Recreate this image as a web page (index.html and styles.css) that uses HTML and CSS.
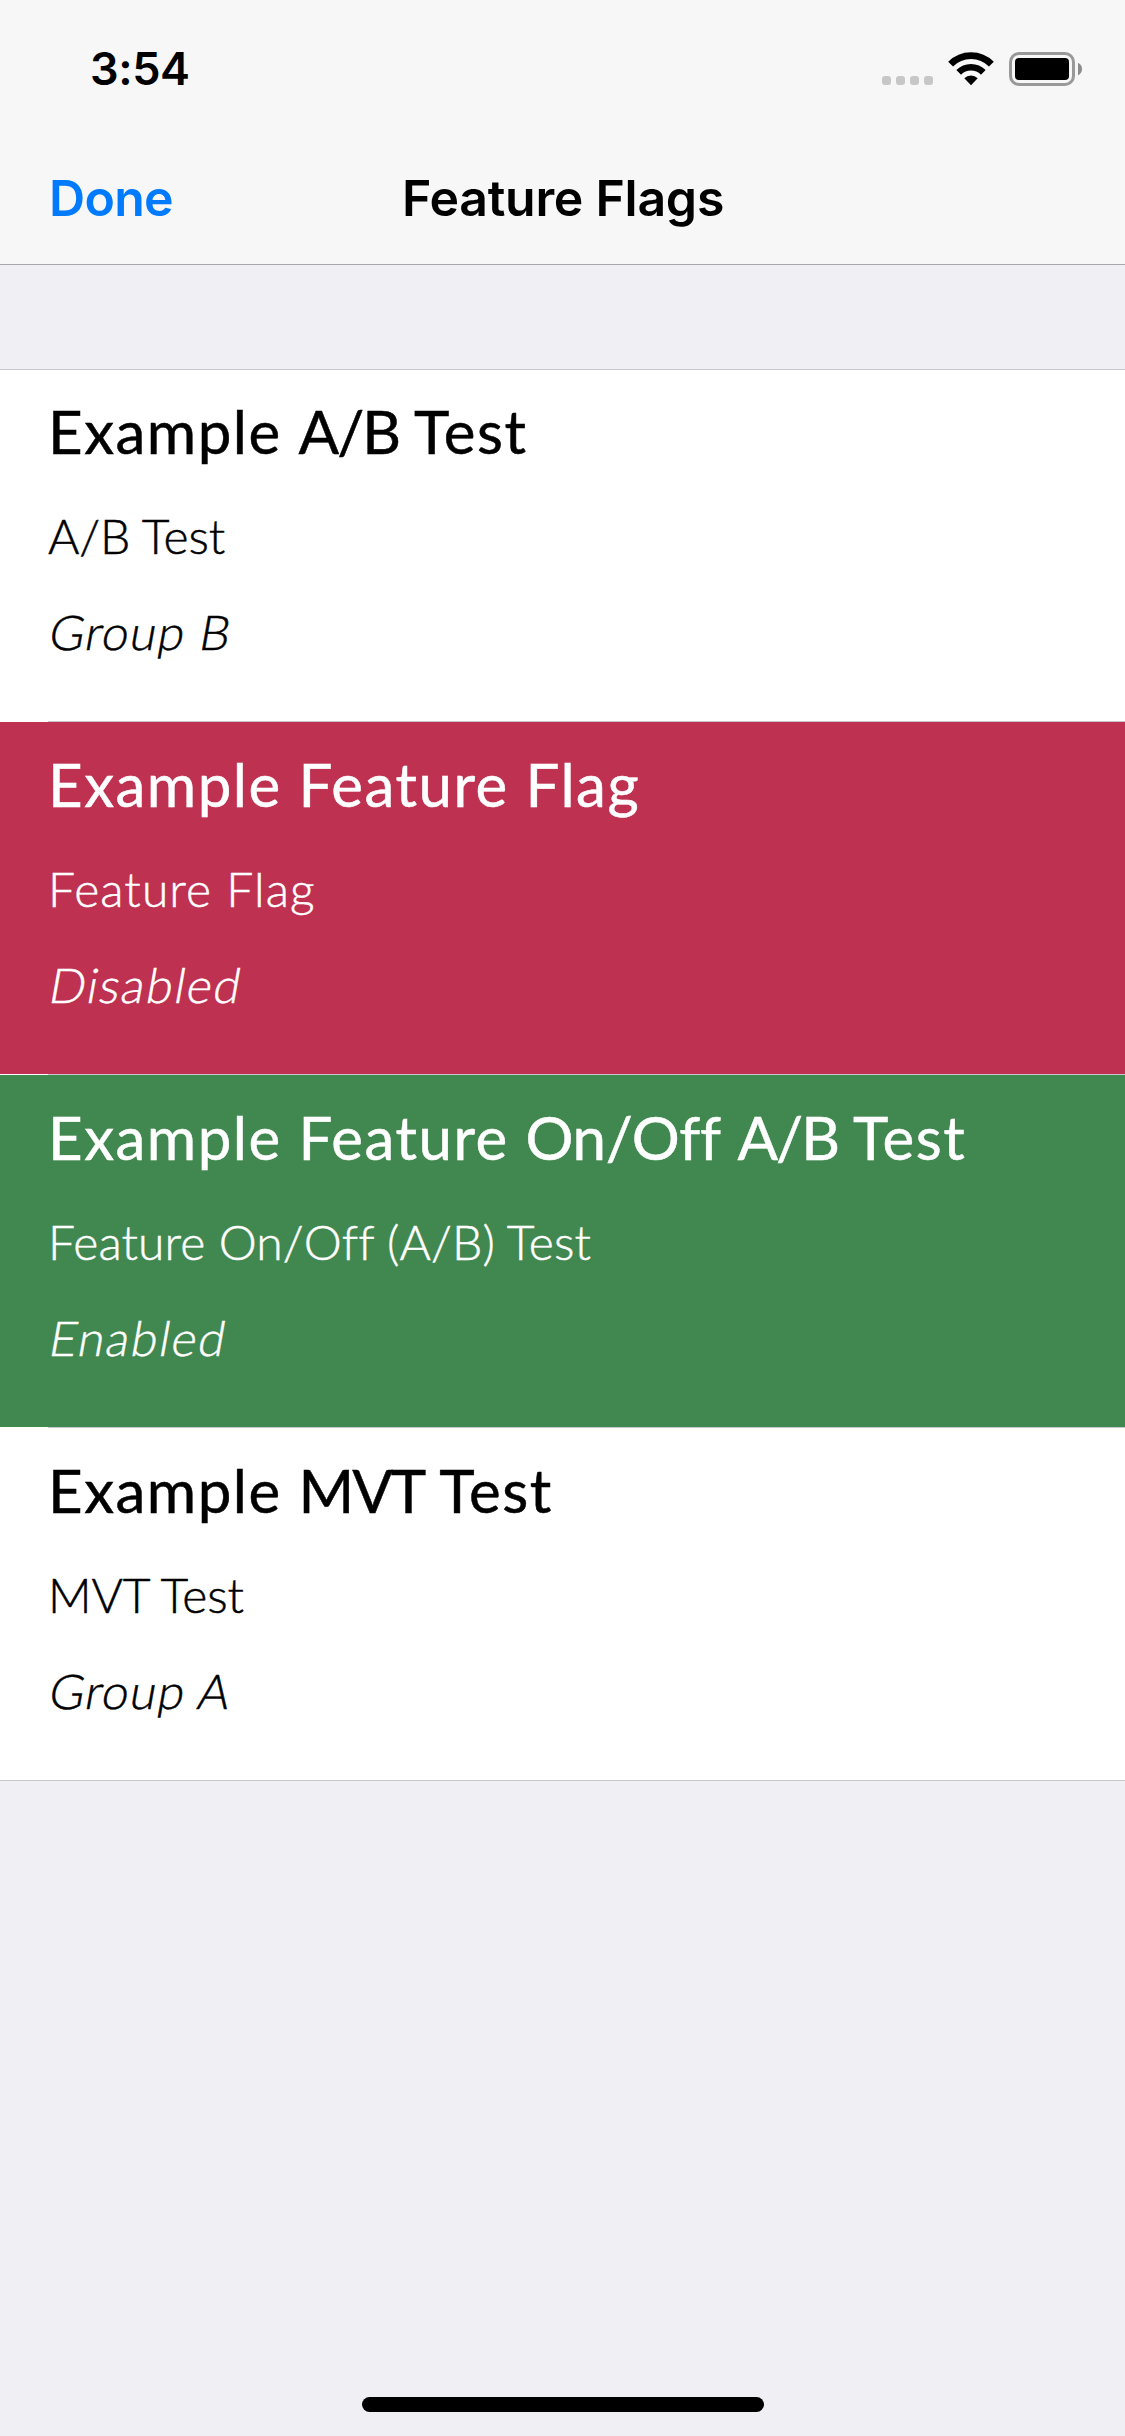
FILE: index.html
```html
<!DOCTYPE html>
<html lang="en">
<head>
<meta charset="utf-8">
<title>Feature Flags</title>
<link rel="stylesheet" href="styles.css">
</head>
<body>
<div class="screen">
  <header class="header">
    <div class="status">
      <span class="time">3:54</span>
      <div class="indicators">
        <div class="signal"><i class="dot"></i><i class="dot"></i><i class="dot"></i><i class="dot"></i></div>
        <svg class="wifi" width="46" height="34" viewBox="0 0 46 34">
          <path d="M2.6 12.1A28.6 28.6 0 0 1 43.4 12.1" fill="none" stroke="#000" stroke-width="6.8"/>
          <path d="M10.7 20.4A17.4 17.4 0 0 1 35.3 20.4" fill="none" stroke="#000" stroke-width="6.6"/>
          <path d="M16.3 26.3A9.6 9.6 0 0 1 29.7 26.3L23 33.2Z"/>
        </svg>
        <svg class="battery" width="74" height="34" viewBox="0 0 74 34">
          <rect x="1.5" y="1.5" width="63" height="31" rx="8.5" fill="none" stroke="#999" stroke-width="3"/>
          <rect x="6" y="6" width="54" height="22" rx="4"/>
          <path d="M69 10.7C71.6 12 73 14.3 73 17S71.6 22 69 23.3Z" fill="#8c8c8c"/>
        </svg>
      </div>
    </div>
    <nav class="nav">
      <a class="done">Done</a>
      <h1 class="heading">Feature Flags</h1>
    </nav>
  </header>
  <main class="list">
    <section class="row first">
      <h2 class="title">Example <span class="close">A/B</span> Test</h2>
      <p class="kind tight">A/B Test</p>
      <p class="value">Group B</p>
    </section>
    <div class="separator"></div>
    <section class="row disabled">
      <h2 class="title">Example Feature Flag</h2>
      <p class="kind wide">Feature Flag</p>
      <p class="value wide">Disabled</p>
    </section>
    <div class="separator"></div>
    <section class="row enabled">
      <h2 class="title">Example Feature <span class="snug">On/Off</span> <span class="close">A/B</span> Test</h2>
      <p class="kind">Feature On/Off (A/B) Test</p>
      <p class="value wide">Enabled</p>
    </section>
    <div class="separator"></div>
    <section class="row">
      <h2 class="title">Example <span class="close">MVT</span> Test</h2>
      <p class="kind tight">MVT Test</p>
      <p class="value">Group A</p>
    </section>
    <div class="separator full"></div>
  </main>
  <div class="home"></div>
</div>
</body>
</html>
```
FILE: styles.css
```css
* { box-sizing: border-box; margin: 0; padding: 0; }
body { background: #efeff4; color: #000; font-family: Lato, "Open Sans", sans-serif; }
.screen { width: 1125px; height: 2436px; display: flex; flex-direction: column; background: #efeff4; overflow: hidden; }

.header { height: 265px; background: #f7f7f7; border-bottom: 1px solid #a7a7aa; font-family: Inter, sans-serif; font-weight: 600; }
.status { height: 132px; padding: 41px 42px 0 90px; display: flex; justify-content: space-between; align-items: flex-start; }
.time { font-size: 45px; line-height: 55px; letter-spacing: -0.4px; }
.indicators { display: flex; padding-top: 11px; }
.signal { display: flex; gap: 5px; padding-top: 24px; margin-right: 15px; }
.dot { width: 9px; height: 9px; border-radius: 3px; background: #c7c7c7; }
.wifi { margin-right: 15px; }
.nav { display: grid; grid-template-columns: 1fr auto 1fr; padding: 36px 48px 0 49px; font-size: 50px; line-height: 60px; }
.done { color: #007aff; letter-spacing: -0.7px; }
.heading { font-size: 50px; font-weight: 600; letter-spacing: -0.27px; }

.list { margin-top: 104px; background: #fff; }
.row { height: 352px; padding: 26px 48px 0; background: #fff; }
.first { padding-top: 25px; border-top: 1px solid #c8c7cc; }
.disabled { background: #be3150; color: #fff; }
.enabled { background: #418850; color: #fff; }
.separator { height: 1px; margin-left: 48px; background: #c8c7cc; }
.separator.full { margin-left: 0; }
.title { font-size: 60px; line-height: 72px; font-weight: 400; letter-spacing: 1.5px; white-space: nowrap; -webkit-text-stroke: 0.5px; }
.close { letter-spacing: -2px; }
.snug { letter-spacing: -0.4px; }
.kind { margin-top: 40px; font-size: 48px; line-height: 58px; font-weight: 300; letter-spacing: 0.14px; -webkit-text-stroke: 0.5px; }
.kind.wide { letter-spacing: 1.09px; }
.kind.tight { letter-spacing: -0.1px; }
/* Slanted upright letterforms stand in for an oblique face. */
.value { width: max-content; margin: 38px 0 0 -1px; font-size: 48px; line-height: 58px; font-weight: 300; letter-spacing: 1.2px; -webkit-text-stroke: 0.5px; transform: skewX(-10deg); transform-origin: 0 47px; }
.value.wide { letter-spacing: 1.7px; }

.home { width: 402px; height: 15px; margin: auto auto 24px 362px; border-radius: 8px; background: #000; }
```
